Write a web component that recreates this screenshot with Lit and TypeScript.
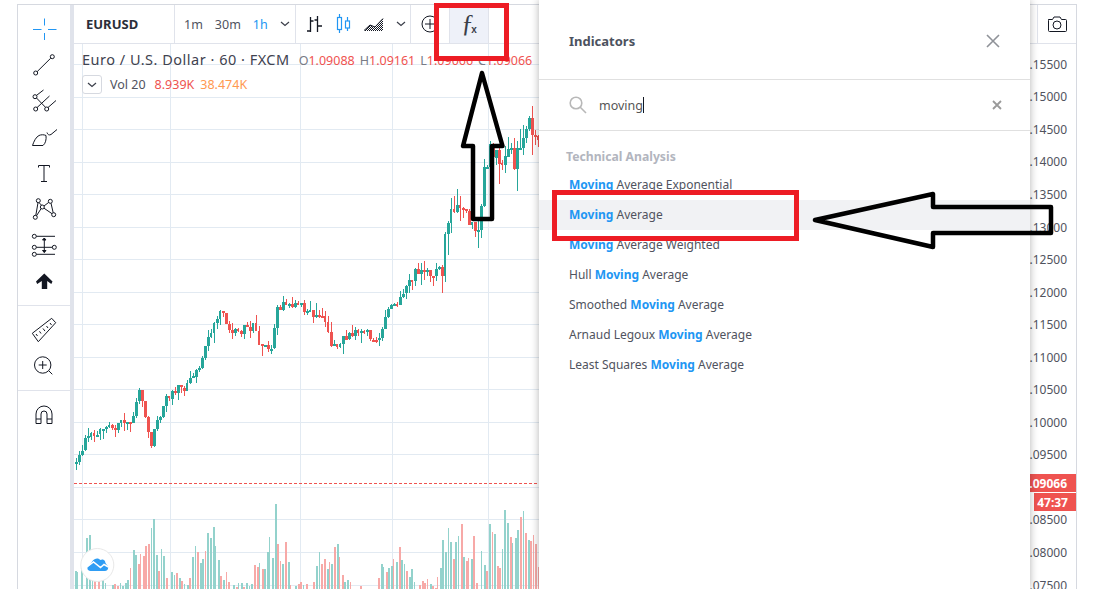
import { LitElement, html, svg, css } from 'lit';
import { customElement } from 'lit/decorators.js';

// close price path of the candles, in page pixels
const PATH = [
    [75, 462], [80, 457], [83, 440], [93, 433], [103, 427], [113, 427], [130, 420], [133, 407], [137, 393], [142, 400],
    [146, 432], [149, 446], [153, 430], [158, 415], [163, 403], [170, 393], [193, 380], [203, 347], [217, 313], [223, 310],
    [227, 333], [240, 330], [253, 327], [258, 347], [270, 347], [277, 305], [300, 307], [313, 318], [323, 317], [330, 347],
    [340, 340], [360, 333], [380, 340], [385, 310], [403, 293], [413, 273], [423, 273], [443, 270], [443, 243], [448, 217],
    [458, 197], [467, 223], [477, 223], [483, 177], [490, 147], [500, 163], [507, 140], [513, 160], [528, 126], [540, 138],
];

// volume bars read off the chart: [x offset, height], negative is a down bar
const VOLUME_A = [
    [45, 18], [52, 17], [62, 23], [77, 51], [86, 54], [95, 30], [103, -22], [115, -16], [125, 12], [135, 6], [155, 4],
    [163, -5], [170, -3], [180, 6], [187, 3], [194, 6], [201, 9], [210, -21], [218, 39], [226, 34], [234, -25], [241, -35],
    [249, -33], [256, -43], [264, -45], [272, 61], [280, 70], [287, 34], [295, -18], [302, 40], [310, 33], [319, -11],
    [334, 17], [341, 14], [349, -16], [356, 11], [364, -8], [373, 5], [380, 4], [388, -11], [395, 32], [404, 43], [411, -37],
    [419, 26], [426, 30], [434, -38], [442, 56], [449, 51], [458, 62], [466, 43], [473, 29], [481, -13], [488, 9], [497, -17],
    [505, -7], [520, 4], [527, -2], [535, 6], [543, 6], [550, -2], [559, 6], [566, 3], [574, 5], [581, -24], [590, -22],
    [598, 26], [605, -20], [612, 20], [620, 37], [628, 52], [635, 31], [644, 85], [652, -45], [660, -28], [667, 25],
    [675, -47], [684, 27], [691, -4], [706, 3], [714, -5], [721, -7], [728, 4], [738, -5], [760, -7], [768, 23], [776, 37],
    [784, -25], [792, -30], [800, 20], [806, -27], [814, 25], [822, -42], [830, 45], [838, -32], [845, -14], [853, 7],
    [860, 9], [870, -7],
];
const VOLUME_B = [
    [30, -3], [84, -11], [92, 25], [100, 22], [108, -17], [115, 21], [123, 23], [130, -30], [137, 27], [146, -42], [154, 29],
    [162, 25], [169, -18], [176, 12], [184, 20], [191, 7], [208, -4], [215, -8], [223, -6], [231, -10], [240, 5], [247, -3],
    [254, -1], [262, -12], [269, 21], [277, 49], [284, 37], [293, 61], [301, 47], [308, -30], [316, 47], [324, 53], [332, -65],
    [339, 32], [347, -28], [354, -31], [362, 30], [370, -53], [377, -6], [394, 38], [402, 24], [409, -18], [417, 65],
    [425, -57], [433, 55], [440, -23], [448, -21], [456, 40], [463, 79], [471, 66], [480, -52], [487, 46], [495, 51],
    [502, 59], [510, -72], [519, 78], [526, -56], [534, 49], [541, -48], [549, -54], [556, -45], [564, -22],
];

const GRID_Y = [64, 97, 129, 162, 194, 227, 259, 292, 324, 357, 389, 422, 454, 487, 519, 552, 585];
const GRID_X = [82, 170, 300, 392, 488];
// 09000 sits under the last price badge, so its row stays empty
const PRICES = ['15500', '15000', '14500', '14000', '13500', '13000', '12500', '12000', '11500', '11000', '10500', '10000', '09500', '', '08500', '08000', '07500'];
const RESULTS = [
    ['', 'Moving', ' Average Exponential'],
    ['', 'Moving', ' Average'],
    ['', 'Moving', ' Average Weighted'],
    ['Hull ', 'Moving', ' Average'],
    ['Smoothed ', 'Moving', ' Average'],
    ['Arnaud Legoux ', 'Moving', ' Average'],
    ['Least Squares ', 'Moving', ' Average'],
];

function random(seed: number) {
    return () => {
        seed = (seed + 0x6d2b79f5) | 0;
        let t = Math.imul(seed ^ (seed >>> 15), 1 | seed);
        t = (t + Math.imul(t ^ (t >>> 7), 61 | t)) ^ t;
        return ((t ^ (t >>> 14)) >>> 0) / 4294967296;
    };
}

function pathAt(x: number) {
    for (let i = 1; i < PATH.length; i++) {
        if (x <= PATH[i][0]) {
            const [x0, y0] = PATH[i - 1];
            const [x1, y1] = PATH[i];
            return y0 + ((y1 - y0) * (x - x0)) / Math.max(x1 - x0, 1);
        }
    }
    return PATH[PATH.length - 1][1];
}

function candles() {
    const rnd = random(11);
    const out = [];
    let prev = pathAt(74);
    for (let x = 75; x < 540; x += 3) {
        const volatile = x > 440 ? 2 : 1;
        const close = pathAt(x) + (rnd() - 0.5) * 10 * volatile;
        const top = Math.min(prev, close);
        const height = Math.max(Math.abs(close - prev), 1.5);
        const wickUp = rnd() * rnd() * 13 * volatile;
        const wickDown = rnd() * rnd() * 13 * volatile;
        const width = rnd() > 0.15 ? 3 : 2;
        const color = close < prev ? '#26a69a' : '#ef5350';
        out.push(svg`
            <rect x=${x + 1} y=${Math.round(top - wickUp)} width="1" height=${Math.round(height + wickUp + wickDown)} fill=${color}></rect>
            <rect x=${x} y=${Math.round(top)} width=${width} height=${Math.max(Math.round(height), 2)} fill=${color}></rect>`);
        prev = close;
    }
    return out;
}

function volumes() {
    const bars = [
        ...VOLUME_A.map(([o, h]) => [60 + o / 3, h]),
        ...VOLUME_B.map(([o, h]) => [350 + o / 3, h]),
    ];
    return bars.map(([x, h], i) => svg`
        <rect x=${Math.round(x)} y=${589 - Math.abs(h)} width=${i % 4 === 1 ? 1 : 2} height=${Math.abs(h)}
            fill=${h > 0 ? '#93d2cc' : '#f7a9a7'}></rect>`);
}

const chevron = html`<svg class="chev" width="10" height="6" viewBox="0 0 10 6"><path d="M1 1l4 3.500L9 1" fill="none" stroke="#3a3e49" stroke-width="1.200"/></svg>`;

const TOOL_ICONS = [
    svg`<g stroke="#2196f3"><path d="M14.500 3.500v7M14.500 18v7M3 14.500h8.500M18 14.500h8.500"/></g>`,
    svg`<circle cx="5.700" cy="22" r="2"/><circle cx="22.300" cy="5.700" r="2"/><path d="M7.200 20.600L20.800 7.100"/>`,
    svg`<circle cx="5" cy="9.700" r="2"/><circle cx="5.700" cy="22" r="2"/><circle cx="16.700" cy="22" r="2"/>
        <path d="M6.500 11l9 9.300M7 20.600L19.500 9M6.500 8.400L13.500 3M18 20.500L26 13.500"/>`,
    svg`<path d="M2.500 22.500C4 18 6 14 9 12.500c2-1 5-1 7 0 .5 4-.5 8-3 10Z"/><path d="M17 9.500c.5 2 2 3 4 2l6-5"/>`,
    svg`<path d="M8.500 8.500V6.500H19.500V8.500M14 6.500V22.500M11 22.500H17"/>`,
    svg`<circle cx="8.300" cy="5.700" r="2"/><circle cx="20.300" cy="6.300" r="2"/><circle cx="12.300" cy="12" r="2"/><circle cx="23.700" cy="19.700" r="2"/><circle cx="5.300" cy="22.300" r="2"/>
        <path d="M5.800 20.400L8 7.700M9 7.600L11.500 10.200M14 11L18.700 7.400M21 8.200L23.200 17.800M14 13.200L22 18.700M11.100 13.600L6.500 20.800"/>`,
    svg`<circle cx="4.300" cy="5.300" r="2"/><circle cx="4.300" cy="16.300" r="2"/><circle cx="24.300" cy="16.300" r="2"/><circle cx="4.300" cy="23.300" r="2"/>
        <path d="M6.300 5.300H25M6.300 16.300H22.300M6.300 23.300H25M14.300 7V21.500"/><path d="M12.500 9L14.300 7 16 9ZM12.500 19.500L14.300 21.500 16 19.500Z" fill="#131722"/>`,
    svg`<path d="M14.300 6.500L22.500 14.500 21.300 17 17.200 14V22H11.800V14L7.200 17 6 14.500Z" fill="#131722" stroke="none"/>`,
];
const TOOL_ICONS_2 = [
    svg`<path d="M2.300 17.300L21.700 2.300 25.700 6.700 8.300 25.700Z"/><path d="M6 18l1.500 2M9.500 15.300l1.500 2.200M13 12.500l2 2.600M16.500 10l1.500 2M20 7l1.500 2"/>`,
    svg`<circle cx="12.700" cy="13" r="8.200"/><path d="M12.700 9v8M8.700 13h8M18.800 18.800L22.300 22.300"/>`,
];

@customElement('app-root')
export class AppRoot extends LitElement {
    private candleMarks = candles();
    private volumeMarks = volumes();

    static styles = css`
        :host {
            display: block;
            position: relative;
            width: 1103px;
            height: 589px;
            overflow: hidden;
            background: #fff;
            font-family: "Noto Sans", "Open Sans", sans-serif;
            color: #131722;
        }
        .frame {
            display: grid;
            grid-template-columns: 52px 4px 1fr;
            width: 1060px;
            height: 585px;
            margin: 4px 0 0 17px;
            box-sizing: border-box;
            border: 1px solid #d6d9e0;
            border-bottom: 0;
        }
        .tools { display: flex; flex-direction: column; }
        .group { padding: 6px 0; border-bottom: 1px solid #e0e3eb; }
        .group:last-child { border-bottom: 0; }
        .tool { display: flex; align-items: center; justify-content: center; height: 36px; }
        .tool svg { fill: none; stroke: #131722; stroke-width: 1; }
        .band { background: #e0e3eb; }
        .main { display: flex; flex-direction: column; min-width: 0; }
        .topbar {
            display: flex;
            height: 39px;
            flex: none;
            box-sizing: border-box;
            border-bottom: 1px solid #e0e3eb;
        }
        .cell { display: flex; align-items: center; box-sizing: border-box; border-right: 1px solid #e0e3eb; }
        .symbol { width: 101px; padding-left: 12px; font-size: 13px; font-weight: 700; color: #2a2e39; }
        .frames { width: 121px; padding-left: 9px; font-size: 12.500px; color: #50535e; gap: 12px; }
        .frames .on { color: #2196f3; }
        .styles { width: 115px; padding-left: 8px; }
        .styles .chev { margin-left: 9px; }
        .plus { width: 38px; justify-content: center; border-right: 0; }
        .fx {
            width: 40px;
            justify-content: center;
            background: #eef1f9;
            border-left: 1px solid #e0e3eb;
            border-right: 1px solid #e0e3eb;
            color: #3a3e49;
        }
        .fx-label { font-family: "Liberation Serif", serif; font-size: 26px; line-height: 1; }
        .fx-label sub { font-family: "Liberation Sans", sans-serif; font-size: 10px; font-weight: 700; line-height: 0; vertical-align: -1px; margin-left: -3px; }
        .spacer { flex: 1; }
        .camera { width: 39px; justify-content: center; border-left: 1px solid #e0e3eb; border-right: 0; }
        .body { position: relative; display: flex; flex: 1; min-height: 0; }
        .chart { flex: 1; min-width: 0; }
        .chart svg { display: block; }
        .axis { width: 46px; flex: none; padding-top: 4px; overflow: hidden; box-sizing: border-box; }
        .price {
            display: flex;
            align-items: center;
            justify-content: flex-end;
            height: 32.560px;
            padding-right: 9px;
            font-size: 12px;
            color: #50535e;
        }
        .axis-wrap { position: relative; display: flex; }
        .badge {
            position: absolute;
            right: 0;
            display: flex;
            align-items: center;
            justify-content: flex-end;
            padding-right: 9px;
            box-sizing: border-box;
            background: #ef5350;
            color: #fff;
            font-size: 12px;
            font-weight: 700;
        }
        .badge.last { top: 430px; width: 46px; height: 18px; }
        .badge.timer { top: 449px; width: 42px; height: 18px; padding-right: 8px; }
        .legend { position: absolute; left: 8px; top: 5px; color: #50535e; white-space: nowrap; }
        .title { display: flex; align-items: baseline; font-size: 14.500px; letter-spacing: 0.500px; height: 22px; color: #3f4350; }
        .ohlc { margin-left: 9px; font-size: 12.500px; letter-spacing: 0; color: #787b86; }
        .ohlc b { font-weight: 400; color: #ef5350; margin-right: 5px; }
        .vol { display: flex; align-items: center; font-size: 12.500px; margin-top: 4px; height: 19px; }
        .toggle {
            display: flex;
            align-items: center;
            justify-content: center;
            width: 20px;
            height: 19px;
            margin-right: 8px;
            box-sizing: border-box;
            border: 1px solid #d6d9e0;
            border-radius: 3px;
            background: #fff;
        }
        .vol .down { color: #ef5350; margin-left: 9px; }
        .vol .ma { color: #ff9850; margin-left: 6px; }
        .panel {
            position: absolute;
            left: 539px;
            top: 0;
            width: 491px;
            height: 589px;
            background: #fff;
            box-shadow: 0 0 8px rgba(0, 0, 0, 0.3);
            font-size: 12px;
            color: #50535e;
        }
        .panel-head {
            display: flex;
            align-items: center;
            justify-content: space-between;
            height: 80px;
            padding: 3px 30px 0 30px;
            box-sizing: border-box;
            border-bottom: 1px solid #e0e0e0;
            font-size: 13px;
            font-weight: 700;
            color: #4c525e;
        }
        .search {
            display: flex;
            align-items: center;
            height: 51px;
            padding: 0 28px 0 30px;
            box-sizing: border-box;
            border-bottom: 1px solid #e0e0e0;
            font-size: 12.500px;
            color: #555;
        }
        .search .query { margin-left: 12px; flex: 1; }
        .caret { display: inline-block; width: 1px; height: 16px; background: #131722; vertical-align: -3px; }
        .section { padding: 17px 0 0 27px; height: 39px; box-sizing: border-box; font-size: 12.200px; font-weight: 700; color: #b2b5be; }
        .row { display: flex; align-items: center; height: 30px; padding: 0 0 2px 30px; box-sizing: border-box; white-space: pre; }
        .row.hover { background: #f1f2f4; }
        .row b { font-weight: 700; color: #2196f3; }
        .marks { position: absolute; left: 0; top: 0; pointer-events: none; }
    `;

    render() {
        return html`
            <div class="frame">
                <div class="tools">
                    <div class="group">${TOOL_ICONS.map((i) => this.tool(i))}</div>
                    <div class="group">${TOOL_ICONS_2.map((i) => this.tool(i))}</div>
                    <div class="group">${this.tool(svg`<path d="M6 22.500V13a8 8 0 0 1 16 0V22.500H17V13a3 3 0 0 0-6 0V22.500ZM6 18H11M17 18H22"/>`)}</div>
                </div>
                <div class="band"></div>
                <div class="main">
                    ${this.renderTopbar()}
                    <div class="body">
                        <div class="chart">${this.renderChart()}</div>
                        <div class="axis-wrap">
                            <div class="axis">${PRICES.map((p) => html`<div class="price">${p ? `1.${p}` : ''}</div>`)}</div>
                            <div class="badge last">1.09066</div>
                            <div class="badge timer">47:37</div>
                        </div>
                        <div class="legend">
                            <div class="title">Euro / U.S. Dollar · 60 · FXCM
                                <span class="ohlc">O<b>1.09088</b>H<b>1.09161</b>L<b>1.09066</b>C<b>1.09066</b></span>
                            </div>
                            <div class="vol">
                                <span class="toggle">${chevron}</span>Vol 20
                                <span class="down">8.939K</span><span class="ma">38.474K</span>
                            </div>
                        </div>
                    </div>
                </div>
            </div>
            ${this.renderPanel()}
            <svg class="marks" width="1103" height="589" viewBox="0 0 1103 589" fill="none">
                <rect x="436.500" y="5.500" width="70" height="53" stroke="#ed1c24" stroke-width="5"></rect>
                <rect x="554.500" y="192.500" width="242" height="46" stroke="#ed1c24" stroke-width="5"></rect>
                <path d="M482 73L463 146H473V219H492V146H502.500Z" stroke="#000" stroke-width="4.500" stroke-linejoin="round"></path>
                <path d="M815 220L933 194V207H1051V233H933V247Z" stroke="#000" stroke-width="4.500" stroke-linejoin="round"></path>
            </svg>
        `;
    }

    private tool(icon: unknown) {
        return html`<div class="tool"><svg width="28" height="28" viewBox="0 0 28 28">${icon}</svg></div>`;
    }

    private renderTopbar() {
        return html`
            <div class="topbar">
                <div class="cell symbol">EURUSD</div>
                <div class="cell frames"><span>1m</span><span>30m</span><span class="on">1h</span>${chevron}</div>
                <div class="cell styles">
                    <svg width="20" height="20" viewBox="0 0 20 20" fill="none" stroke="#131722" stroke-width="1.300"><path d="M6.500 3v15M3 17h3.500M6.500 7h3M13.500 2v16M10.500 6h3M13.500 12h4.500"/></svg>
                    <svg style="margin-left:9px" width="20" height="24" viewBox="0 0 20 24" fill="none" stroke="#2196f3" stroke-width="1.200"><path d="M6.500 2v3.500M6.500 17.500V21M14.500 5v4M14.500 16v3"/><rect x="4.500" y="5.500" width="4" height="12"></rect><rect x="12.500" y="9" width="4" height="7"></rect></svg>
                    <svg style="margin-left:10px" width="24" height="20" viewBox="0 0 24 20">
                        <defs><pattern id="dots" width="2" height="2" patternUnits="userSpaceOnUse"><rect width="1" height="1" fill="#131722"></rect><rect x="1" y="1" width="1" height="1" fill="#131722"></rect></pattern></defs>
                        <path d="M1 17L7 11 12 13 20 4.500V17Z" fill="url(#dots)"></path>
                        <path d="M1 16.500L7 11 12 13 20 4.500" fill="none" stroke="#131722"></path>
                    </svg>
                    ${chevron}
                </div>
                <div class="cell plus">
                    <svg width="20" height="20" viewBox="0 0 20 20" fill="none" stroke="#131722"><circle cx="10" cy="10" r="8"></circle><path d="M10 5v10M5 10h10"></path></svg>
                </div>
                <div class="cell fx"><span class="fx-label">ƒ<sub>x</sub></span></div>
                <div class="spacer"></div>
                <div class="cell camera">
                    <svg width="22" height="20" viewBox="0 0 22 20" fill="none" stroke="#131722"><path d="M2.500 5.500h4l1.500-2.500h6l1.500 2.500h4a1 1 0 0 1 1 1v10a1 1 0 0 1-1 1h-16a1 1 0 0 1-1-1v-10a1 1 0 0 1 1-1Z"></path><circle cx="11" cy="11" r="4"></circle></svg>
                </div>
            </div>
        `;
    }

    private renderChart() {
        return html`
            <svg width="956" height="545" viewBox="74 44 956 545">
                <g fill="#e2eaf2" shape-rendering="crispEdges">
                    ${GRID_Y.map((y) => svg`<rect x="74" y=${y} width="956" height="1"></rect>`)}
                    ${GRID_X.map((x) => svg`<rect x=${x} y="44" width="1" height="545"></rect>`)}
                </g>
                <g shape-rendering="crispEdges">${this.volumeMarks}</g>
                <g shape-rendering="crispEdges">${this.candleMarks}</g>
                <path d="M74 483.500H540" stroke="#ef5350" stroke-dasharray="3 2"></path>
                <circle cx="97.300" cy="565" r="16.500" fill="#fff" stroke="#e8e8e8"></circle>
                <path d="M90.500 571c-3.500 0-4-4-1.500-5l3.500-5c2-3 6-3.500 8-1 1.500-1 3.500-.5 4.500 1 0 1.500 1 3 2 4 2 1.500 1.500 6-2 6Z" fill="#2f9df4"></path>
                <path d="M87.500 566.500L93.500 562 100.500 567.500 104 564.500 108.500 567" fill="none" stroke="#fff" stroke-width="1.500"></path>
            </svg>
        `;
    }

    private renderPanel() {
        return html`
            <div class="panel">
                <div class="panel-head">
                    <span>Indicators</span>
                    <svg width="14" height="14" viewBox="0 0 14 14" stroke="#8f9298" stroke-width="1.600"><path d="M1 1l12 12M13 1L1 13"></path></svg>
                </div>
                <div class="search">
                    <svg width="18" height="18" viewBox="0 0 18 18" fill="none" stroke="#b8b8b8" stroke-width="1.600"><circle cx="7" cy="7" r="5.800"></circle><path d="M11 11l6 6"></path></svg>
                    <span class="query">moving<span class="caret"></span></span>
                    <svg width="10" height="10" viewBox="0 0 10 10" stroke="#9a9a9a" stroke-width="1.800"><path d="M1 1l8 8M9 1L1 9"></path></svg>
                </div>
                <div class="section">Technical Analysis</div>
                ${RESULTS.map(([before, hit, after], i) => html`
                    <div class="row ${i === 1 ? 'hover' : ''}">${before}<b>${hit}</b>${after}</div>
                `)}
            </div>
        `;
    }
}
